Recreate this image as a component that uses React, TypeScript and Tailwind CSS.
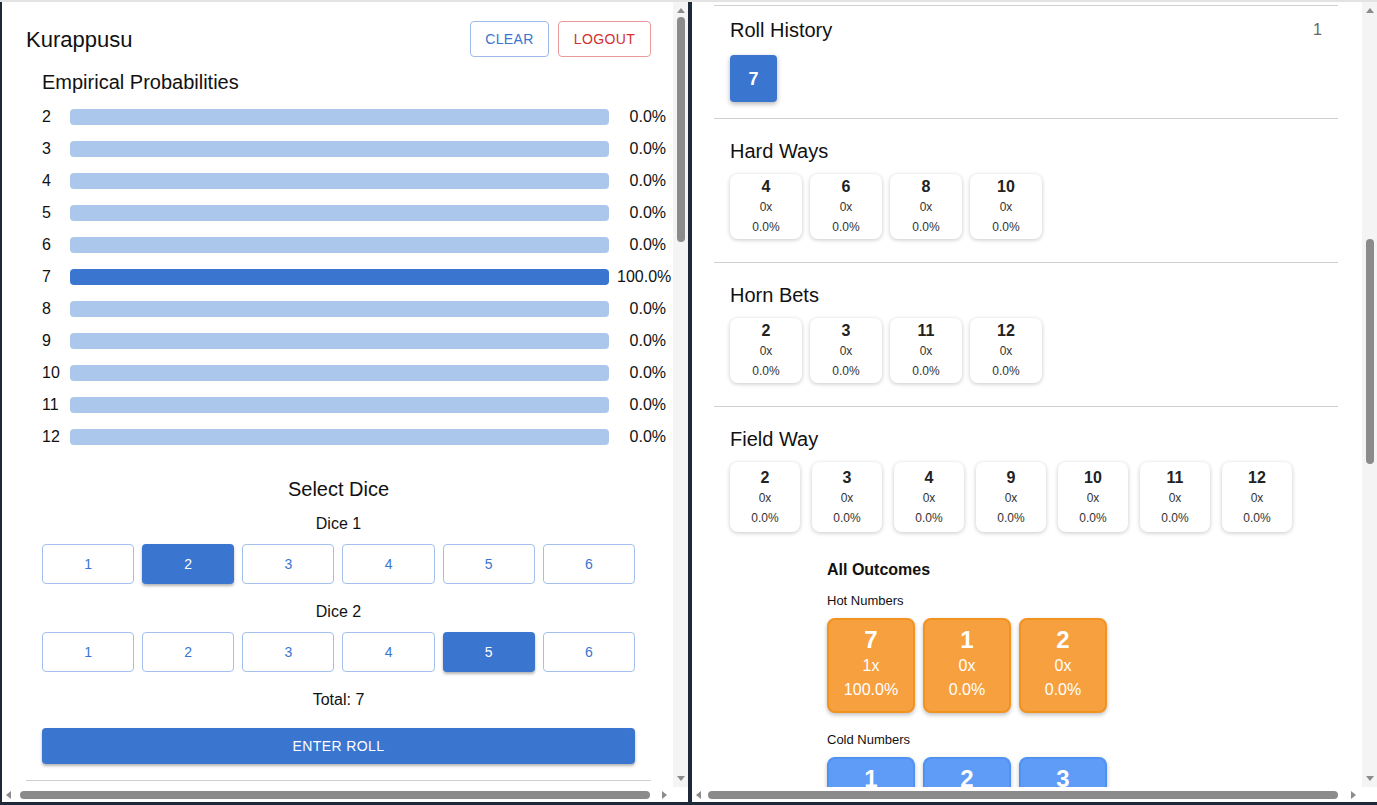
import React from "react";

const sums = [2, 3, 4, 5, 6, 7, 8, 9, 10, 11, 12];

const VScroll = ({ thumb }: { thumb: string }) => (
  <div className="flex w-[15px] shrink-0 flex-col items-center bg-[#f4f4f4]">
    <div className="mt-[6px] h-0 w-0 border-x-[4px] border-b-[5px] border-x-transparent border-b-[#8b8b8b]" />
    <div className={`w-[8px] rounded-full bg-[#8b8b8b] ${thumb}`} />
    <div className="flex-1" />
    <div className="mb-[6px] h-0 w-0 border-x-[4px] border-t-[5px] border-x-transparent border-t-[#8b8b8b]" />
  </div>
);

const HScroll = ({ thumb }: { thumb: string }) => (
  <div className="flex h-[15px] shrink-0 items-center bg-white">
    <div className="ml-[4px] h-0 w-0 border-y-[4px] border-r-[5px] border-y-transparent border-r-[#8b8b8b]" />
    <div className={`h-[8px] rounded-full bg-[#8b8b8b] ${thumb}`} />
    <div className="flex-1" />
    <div className="mr-[6px] h-0 w-0 border-y-[4px] border-l-[5px] border-y-transparent border-l-[#8b8b8b]" />
    <div className="h-full w-[15px] bg-white" />
  </div>
);

const DiceRow = ({ selected }: { selected: number }) => (
  <div className="grid grid-cols-6 gap-2">
    {[1, 2, 3, 4, 5, 6].map((n) =>
      n === selected ? (
        <div
          key={n}
          className="flex h-10 items-center justify-center rounded-[4px] bg-[#3a75d0] text-sm text-white shadow-[0_2px_3px_rgba(0,0,0,0.3)]"
        >
          {n}
        </div>
      ) : (
        <div
          key={n}
          className="flex h-10 items-center justify-center rounded-[4px] border border-[#a4bfeb] text-sm text-[#3a75d0]"
        >
          {n}
        </div>
      )
    )}
  </div>
);

const SmallCard = ({ n, tall }: { n: number; tall?: boolean }) => (
  <div
    className={`flex flex-col items-center rounded-lg bg-white shadow-[0_1px_4px_rgba(0,0,0,0.22)] ${
      tall ? "h-[70px] w-[70px] pt-[5px]" : "h-[65px] w-[72px] pt-[2px]"
    }`}
  >
    <div className="text-base leading-[21px] font-bold text-[#222]">{n}</div>
    <div className="text-xs leading-[20px] text-[#333]">0x</div>
    <div className="text-xs leading-[20px] text-[#333]">0.0%</div>
  </div>
);

const BigCard = ({
  n,
  count,
  pct,
  cold,
}: {
  n: number;
  count: string;
  pct: string;
  cold?: boolean;
}) => (
  <div
    className={`flex h-[95px] w-[88px] shrink-0 flex-col items-center rounded-lg border-2 pt-[6px] text-white shadow-[0_2px_4px_rgba(0,0,0,0.25)] ${
      cold ? "border-[#4f92f2] bg-[#5e9cf8]" : "border-[#f2931f] bg-[#f7a03f]"
    }`}
  >
    <div className="text-2xl leading-[28px] font-bold">{n}</div>
    <div className="text-base leading-[24px]">{count}</div>
    <div className="text-base leading-[24px]">{pct}</div>
  </div>
);

const Title = ({ children }: { children: React.ReactNode }) => (
  <div className="text-[20px] leading-6 text-[#111]">{children}</div>
);

export default function App() {
  return (
    <div className="flex h-[805px] w-[1377px] flex-col overflow-hidden bg-[#1d2838] font-['Liberation_Sans',Arial,sans-serif]">
      <div className="h-[2px] shrink-0 bg-[#e3e3e3]" />
      <div className="flex min-h-0 flex-1 gap-[4px] pb-[3px] pl-[2px]">
        {/* left panel */}
        <div className="flex w-[686px] shrink-0 flex-col bg-white">
          <div className="flex min-h-0 flex-1">
            <div className="min-w-0 flex-1 overflow-hidden pt-[19px] pr-[22px] pl-6">
              <div className="flex items-center justify-between">
                <div className="text-[22px] text-[#111]">Kurappusu</div>
                <div className="flex gap-[9px]">
                  <button className="h-9 w-[79px] rounded-[4px] border border-[#9ebbe8] text-sm tracking-[0.4px] text-[#3a75d0]">
                    CLEAR
                  </button>
                  <button className="h-9 w-[93px] rounded-[4px] border border-[#ea9a9a] text-sm tracking-[0.4px] text-[#d32f2f]">
                    LOGOUT
                  </button>
                </div>
              </div>

              <div className="mt-[13px] px-4">
                <Title>Empirical Probabilities</Title>
                <div className="mt-[7px]">
                  {sums.map((s) => (
                    <div key={s} className="flex h-8 items-center text-base text-[#111]">
                      <div className="w-[28px] shrink-0">{s}</div>
                      <div
                        className={`h-4 w-[539px] shrink-0 rounded-[4px] ${
                          s === 7 ? "bg-[#3a75d0]" : "bg-[#abc8ec]"
                        }`}
                      />
                      <div className="ml-2 min-w-[49px] text-right whitespace-nowrap">
                        {s === 7 ? "100.0%" : "0.0%"}
                      </div>
                    </div>
                  ))}
                </div>

                <div className="mt-[24px] text-center">
                  <Title>Select Dice</Title>
                  <div className="mt-[13px] text-base leading-5 text-[#111]">Dice 1</div>
                </div>
                <div className="mt-[10px]">
                  <DiceRow selected={2} />
                </div>
                <div className="mt-[18px] text-center text-base leading-5 text-[#111]">Dice 2</div>
                <div className="mt-[10px]">
                  <DiceRow selected={5} />
                </div>
                <div className="mt-[18px] text-center text-base leading-5 text-[#111]">Total: 7</div>
                <button className="mt-[18px] flex h-9 w-full items-center justify-center rounded-[4px] bg-[#3a75d0] text-sm tracking-[0.4px] text-white shadow-[0_2px_3px_rgba(0,0,0,0.3)]">
                  ENTER ROLL
                </button>
              </div>
              <div className="mt-4 border-t border-[#d0d0d0]" />
            </div>
            <VScroll thumb="mt-[4px] h-[225px]" />
          </div>
          <HScroll thumb="ml-[9px] w-[630px]" />
        </div>

        {/* right panel */}
        <div className="flex min-w-0 flex-1 flex-col bg-white">
          <div className="flex min-h-0 flex-1">
            <div className="min-w-0 flex-1 overflow-hidden pt-[3px] pr-6 pl-[22px]">
              <div className="border-t border-[#d0d0d0]" />
              <div className="px-4 pt-[12px] pb-4">
                <div className="flex items-center justify-between">
                  <Title>Roll History</Title>
                  <div className="text-base text-[#666]">1</div>
                </div>
                <div className="mt-[13px] flex h-[47px] w-[47px] items-center justify-center rounded-[4px] bg-[#3a75d0] text-lg font-bold text-white shadow-[0_2px_5px_rgba(0,0,0,0.3)]">
                  7
                </div>
              </div>
              <div className="border-t border-[#d0d0d0]" />

              <div className="px-4 pt-5 pb-[23px]">
                <Title>Hard Ways</Title>
                <div className="mt-[11px] flex gap-2">
                  {[4, 6, 8, 10].map((n) => (
                    <SmallCard key={n} n={n} />
                  ))}
                </div>
              </div>
              <div className="border-t border-[#d0d0d0]" />

              <div className="px-4 pt-5 pb-[23px]">
                <Title>Horn Bets</Title>
                <div className="mt-[11px] flex gap-2">
                  {[2, 3, 11, 12].map((n) => (
                    <SmallCard key={n} n={n} />
                  ))}
                </div>
              </div>
              <div className="border-t border-[#d0d0d0]" />

              <div className="px-4 pt-5">
                <Title>Field Way</Title>
                <div className="mt-[11px] flex gap-3">
                  {[2, 3, 4, 9, 10, 11, 12].map((n) => (
                    <SmallCard key={n} n={n} tall />
                  ))}
                </div>

                <div className="mt-[28px] pl-[97px]">
                  <div className="text-base leading-5 font-bold text-[#111]">All Outcomes</div>
                  <div className="mt-[13px] text-[13px] leading-4 text-[#111]">Hot Numbers</div>
                  <div className="mt-[9px] flex gap-2">
                    <BigCard n={7} count="1x" pct="100.0%" />
                    <BigCard n={1} count="0x" pct="0.0%" />
                    <BigCard n={2} count="0x" pct="0.0%" />
                  </div>
                  <div className="mt-[19px] text-[13px] leading-4 text-[#111]">Cold Numbers</div>
                  <div className="mt-[9px] flex gap-2">
                    <BigCard n={1} count="0x" pct="0.0%" cold />
                    <BigCard n={2} count="0x" pct="0.0%" cold />
                    <BigCard n={3} count="0x" pct="0.0%" cold />
                  </div>
                </div>
              </div>
            </div>
            <VScroll thumb="mt-[226px] h-[225px]" />
          </div>
          <HScroll thumb="ml-[7px] w-[630px]" />
        </div>
      </div>
    </div>
  );
}
